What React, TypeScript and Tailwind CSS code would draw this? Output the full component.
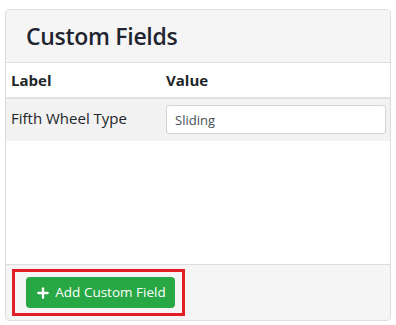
import React from "react";
import { Plus } from "lucide-react";

export default function App() {
  const fields = [{ label: "Fifth Wheel Type", value: "Sliding" }];

  return (
    <div className="bg-white w-[396px] h-[325px] pt-[9px] pl-[5px] font-['Open_Sans',sans-serif] text-[#212529]">
      <div className="w-[386px] h-[312px] flex flex-col border border-[#dddddd] rounded-[4px] overflow-hidden">
        {/* Header */}
        <div className="h-[53px] bg-[#f5f5f5] border-b border-[#dddddd] flex items-center pl-[20px]">
          <h2 className="text-[23px] font-semibold tracking-[-0.3px] leading-none text-[#1f2530]">Custom Fields</h2>
        </div>

        {/* Table */}
        <div className="flex-1 bg-white">
          <div className="grid grid-cols-[160px_1fr] h-[36px] items-center border-b-2 border-[#dee2e6] text-[15px] font-bold">
            <span className="pl-[5px]">Label</span>
            <span>Value</span>
          </div>
          {fields.map((f, idx) => (
            <div key={idx} className="grid grid-cols-[160px_1fr] h-[42px] items-center bg-[#f2f2f2] pr-[4px]">
              <span className="pl-[5px] text-[15px] -mt-[4px]">{f.label}</span>
              <input
                readOnly
                value={f.value}
                className="h-[29px] -mt-[1px] w-full bg-white border border-[#ced4da] rounded-[3px] px-[8px] text-[13px] text-[#495057] outline-none"
              />
            </div>
          ))}
        </div>

        {/* Footer */}
        <div className="h-[56px] bg-[#f5f5f5] border-t border-[#dddddd] px-[6px] pt-[4px]">
          <div className="w-[173px] h-[47px] border-[3px] border-[#e31e24] pl-[11px] pt-[5px]">
            <button className="h-[31px] w-[149px] bg-[#28a745] rounded-[4px] text-white text-[13.5px] flex items-center justify-center gap-[4px]">
              <Plus className="h-[16px] w-[16px]" strokeWidth={3.5} />
              <span>Add Custom Field</span>
            </button>
          </div>
        </div>
      </div>
    </div>
  );
}
